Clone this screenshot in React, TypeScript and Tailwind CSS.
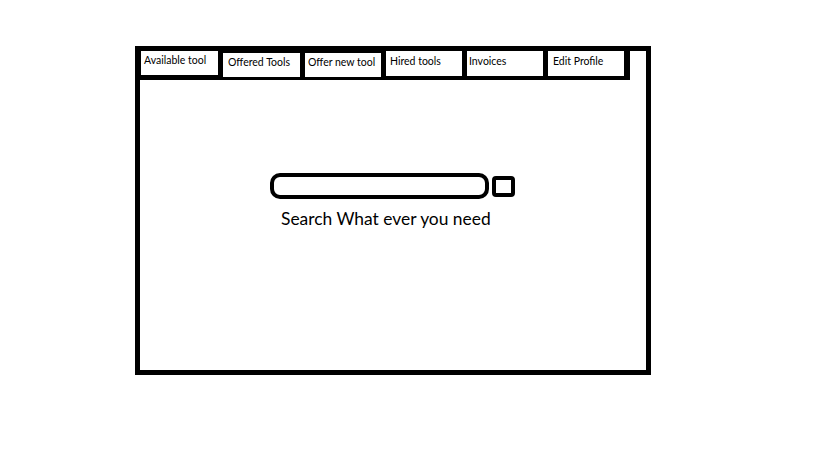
const tabs = [
  { label: "Available tool", w: "w-[77px]", pos: "mt-0 h-[24px] pt-[3px] pl-[3px]" },
  { label: "Offered Tools", w: "w-[77px]", pos: "mt-[2px] h-[24px] pt-[3px] pl-[5px]" },
  { label: "Offer new tool", w: "w-[76px]", pos: "mt-[2px] h-[24px] pt-[3px] pl-[3px]" },
  { label: "Hired tools", w: "w-[76px]", pos: "mt-0 h-[25px] pt-[4px] pl-[4px]" },
  { label: "Invoices", w: "w-[76px]", pos: "mt-0 h-[25px] pt-[4px] pl-[2px]" },
  { label: "Edit Profile", w: "w-[76px]", pos: "mt-0 h-[25px] pt-[4px] pl-[5px]" },
];

export default function App() {
  return (
    <div className="w-[819px] h-[460px] bg-white overflow-hidden font-['Lato',sans-serif]">
      <div className="ml-[135px] mt-[46px] w-[516px] h-[329px] border-[5px] border-black flex flex-col">
        <div className="flex items-start gap-[5px] w-[490px] h-[29px] bg-black pl-[1px]">
          {tabs.map((tab) => (
            <div
              key={tab.label}
              className={`${tab.w} ${tab.pos} bg-white text-[10.5px] leading-[12px] text-black`}>
              {tab.label}
            </div>
          ))}
        </div>

        <div className="flex flex-col">
          <div className="flex items-start gap-[3px] ml-[130px] mt-[93px]">
            <div className="w-[219px] h-[26px] border-[4px] border-black rounded-[10px]" />
            <div className="mt-[3px] w-[23px] h-[21px] border-[4px] border-black rounded-[4px]" />
          </div>
          <p className="ml-[141px] mt-[9px] text-[17.4px] leading-[21px] text-black">
            Search What ever you need
          </p>
        </div>
      </div>
    </div>
  );
}
